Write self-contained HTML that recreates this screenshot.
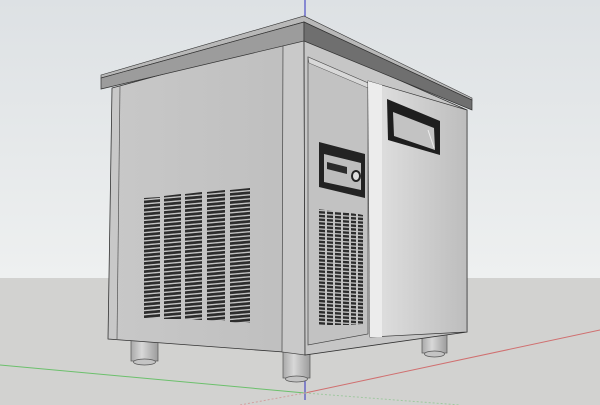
<!DOCTYPE html>
<html><head><meta charset="utf-8"><style>html,body{margin:0;padding:0;width:600px;height:405px;overflow:hidden}</style></head>
<body>
<svg width="600" height="405" viewBox="0 0 600 405" xmlns="http://www.w3.org/2000/svg">
<defs>
<linearGradient id="sky" x1="0" y1="0" x2="0" y2="1"><stop offset="0" stop-color="#dde1e4"/><stop offset="1" stop-color="#eef0f0"/></linearGradient>
<linearGradient id="door" x1="0" y1="0" x2="1" y2="0"><stop offset="0" stop-color="#e2e2e2"/><stop offset="1" stop-color="#bdbdbd"/></linearGradient>
<linearGradient id="left" x1="0" y1="0" x2="1" y2="0"><stop offset="0" stop-color="#c8c8c8"/><stop offset="1" stop-color="#bfbfbf"/></linearGradient>
<linearGradient id="leg" x1="0" y1="0" x2="1" y2="0"><stop offset="0" stop-color="#a9a9a9"/><stop offset="0.4" stop-color="#d8d8d8"/><stop offset="1" stop-color="#9c9c9c"/></linearGradient>
<pattern id="slL" width="40" height="4.1" patternUnits="userSpaceOnUse" patternTransform="skewY(-5)"><rect width="40" height="2.7" fill="#2c2c2c"/></pattern>
<pattern id="slR" width="40" height="3.7" patternUnits="userSpaceOnUse" patternTransform="skewY(4)"><rect width="40" height="2.4" fill="#2c2c2c"/></pattern>
</defs>
<rect width="600" height="278" fill="url(#sky)"/>
<rect y="278" width="600" height="127" fill="#d2d2d0"/>
<!-- axes -->
<line x1="305" y1="0" x2="305" y2="400" stroke="#3030c0" stroke-width="1"/>
<line x1="0" y1="365" x2="305" y2="393" stroke="#6cc06c" stroke-width="1"/>
<line x1="305" y1="393" x2="600" y2="330" stroke="#d07070" stroke-width="1"/>
<line x1="305" y1="393" x2="460" y2="405" stroke="#a0c8a0" stroke-width="1" stroke-dasharray="2,2"/>
<line x1="305" y1="393" x2="240" y2="405" stroke="#d0a0a0" stroke-width="1" stroke-dasharray="2,2"/>
<!-- legs -->
<rect x="131" y="336" width="27" height="25" fill="url(#leg)" stroke="#555" stroke-width="0.7"/>
<ellipse cx="144.5" cy="362" rx="11" ry="3" fill="#c4c4c4" stroke="#555" stroke-width="0.7"/>
<rect x="283" y="350" width="27" height="28" fill="url(#leg)" stroke="#555" stroke-width="0.7"/>
<ellipse cx="296.5" cy="379" rx="11" ry="3" fill="#c4c4c4" stroke="#555" stroke-width="0.7"/>
<rect x="422" y="330" width="25" height="23" fill="url(#leg)" stroke="#555" stroke-width="0.7"/>
<ellipse cx="434.5" cy="354" rx="10" ry="3" fill="#c4c4c4" stroke="#555" stroke-width="0.7"/>
<!-- left side body -->
<polygon points="112,88 296,38 297,353 108,339" fill="url(#left)" stroke="#333" stroke-width="0.8"/>
<line x1="120" y1="86" x2="117" y2="339" stroke="#555" stroke-width="0.7"/>
<polygon points="283,42 304,38 305,355 282,352" fill="#c9c9c9" stroke="#444" stroke-width="0.7"/>
<!-- front body -->
<polygon points="304,38 467,110 467,332 305,355" fill="#c6c6c6" stroke="#333" stroke-width="0.8"/>
<polygon points="308,57 368,83 368,334 308,345" fill="#c2c2c2" stroke="#444" stroke-width="0.7"/>
<polygon points="308,57 368,83 368,88 309,63" fill="#d8d8d8" stroke="#555" stroke-width="0.5"/>
<!-- door -->
<polygon points="368,81 467,110 467,332 370,337" fill="url(#door)" stroke="#333" stroke-width="0.7"/>
<polygon points="368,81 382,85 382,337 370,337" fill="#ececec"/>
<!-- handle -->
<polygon points="387,99 440,121 440,155 388,140" fill="#1e1e1e"/>
<polygon points="393,112 434,128 435,150 394,136" fill="#c3c3c3"/>
<line x1="428" y1="130" x2="434" y2="148" stroke="#eee" stroke-width="1"/>
<!-- controller -->
<polygon points="319,142 365,154 365,198 319,187" fill="#232323"/>
<polygon points="324,154 361,163 361,190 324,182" fill="#bdbdbd"/>
<polygon points="327,162 347,167 347,174 327,169" fill="#2a2a2a"/>
<ellipse cx="356" cy="176" rx="5" ry="6" fill="#222"/>
<ellipse cx="356" cy="176" rx="3" ry="4" fill="#ddd"/>
<!-- top slab -->
<polygon points="101,75 304,16 472,98 472,100 304,22 101,78" fill="#b8b8b8" stroke="#333" stroke-width="0.6"/>
<polygon points="101,78 304,22 304,41 101,89" fill="#9c9c9c" stroke="#333" stroke-width="0.7"/>
<polygon points="304,22 472,100 472,110 304,41" fill="#6f6f6f" stroke="#333" stroke-width="0.7"/>
<!-- left vents -->
<polygon points="144,198 160,197 160,318 144,318" fill="url(#slL)"/>
<polygon points="164,196 181,194 181,319 164,319" fill="url(#slL)"/>
<polygon points="185,194 202,192 202,320 185,319" fill="url(#slL)"/>
<polygon points="207,192 225,190 225,321 207,320" fill="url(#slL)"/>
<polygon points="230,190 250,188 250,323 230,322" fill="url(#slL)"/>
<!-- right vents -->
<polygon points="319,209 325,210 325,325 319,325" fill="url(#slR)"/>
<polygon points="327,210 333,211 333,325 327,325" fill="url(#slR)"/>
<polygon points="335,211 341,212 341,325 335,325" fill="url(#slR)"/>
<polygon points="343,212 349,213 349,325 343,325" fill="url(#slR)"/>
<polygon points="351,213 356,214 356,325 351,325" fill="url(#slR)"/>
<polygon points="358,214 363,215 363,325 358,325" fill="url(#slR)"/>
</svg>
</body></html>
